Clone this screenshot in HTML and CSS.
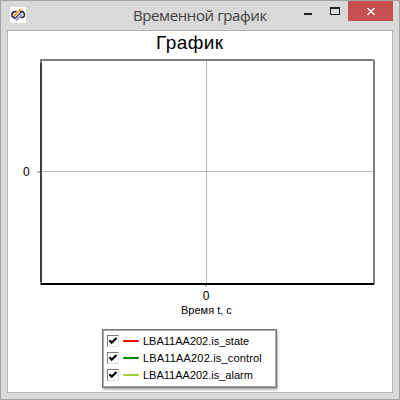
FILE: index.html
```
<!DOCTYPE html>
<html lang="ru">
<head>
<meta charset="utf-8">
<title>Временной график</title>
<link rel="stylesheet" href="styles.css">
</head>
<body>
<div class="window">
  <header class="titlebar">
    <svg class="app-icon" width="16" height="16" viewBox="0 0 16 16">
      <rect width="16" height="16" fill="#fff"/>
      <path d="M6.5 4.7H4L2 6.5V9L4 10.6H5M10 4.7H12.5L14.3 6.5V9L12.5 10.5H10.5" fill="none" stroke="#2d2550" stroke-width="1.7"/>
      <path d="M4.5 11.8L11.5 4.8" stroke="#2d2550" stroke-width="1.2"/>
      <path d="M6 13.4L12 7.4" stroke="#9693bd" stroke-width="2"/>
      <path d="M4 9L10.8 2.2" stroke="#f29a20" stroke-width="1.8"/>
    </svg>
    <h1 class="caption">Временной график</h1>
    <div class="controls">
      <svg class="control" width="27" height="20" viewBox="0 0 27 20" shape-rendering="crispEdges"><rect x="7" y="12" width="8" height="2" fill="#222"/></svg>
      <svg class="control" width="24" height="20" viewBox="0 0 24 20" shape-rendering="crispEdges"><path d="M6 6H16V14H6ZM7 8V13H15V8Z" fill="#222" fill-rule="evenodd"/></svg>
      <svg class="control close" width="45" height="20" viewBox="0 0 45 20" shape-rendering="crispEdges"><path d="M19 7h2v1h1v1h2v-1h1v-1h2v1h-1v1h-1v1h-1v1h1v1h1v1h1v1h-2v-1h-1v-1h-2v1h-1v1h-2v-1h1v-1h1v-1h1v-1h-1v-1h-1v-1h-1z" fill="#fff"/></svg>
    </div>
  </header>
  <main class="client">
    <h2 class="chart-title">График</h2>
    <div class="plot-row">
      <span class="y-tick">0</span>
      <svg class="plot" width="340" height="231" viewBox="0 0 340 231" shape-rendering="crispEdges">
        <path d="M4 113H336M170 2V225" stroke="#b8b8b8" transform="translate(.5 .5)"/>
        <rect x="1" y="113" width="3" height="2" fill="#b8b8b8"/>
        <rect x="169" y="226" width="2" height="3" fill="#b8b8b8"/>
        <rect x="4" y="1" width="334" height="2" fill="#808080"/>
        <rect x="337" y="2" width="2" height="224" fill="#808080"/>
        <rect x="4" y="2" width="2" height="3" fill="#808080"/>
        <rect x="4" y="5" width="2" height="219" fill="#404040"/>
        <rect x="4" y="224" width="2" height="3" fill="#808080"/>
        <rect x="5" y="225" width="333" height="2" fill="#000"/>
      </svg>
    </div>
    <div class="x-tick">0</div>
    <div class="x-title">Время t, с</div>
    <ul class="legend">
      <li class="entry"><svg class="check" width="12" height="12" viewBox="0 0 12 12"><path d="M2.5 5.2L4.7 7.7L9.5 3" fill="none" stroke="#000" stroke-width="2.2"/></svg><span class="swatch red"></span><span class="name">LBA11AA202.is_state</span></li>
      <li class="entry"><svg class="check" width="12" height="12" viewBox="0 0 12 12"><path d="M2.5 5.2L4.7 7.7L9.5 3" fill="none" stroke="#000" stroke-width="2.2"/></svg><span class="swatch green"></span><span class="name wide">LBA11AA202.is_control</span></li>
      <li class="entry"><svg class="check" width="12" height="12" viewBox="0 0 12 12"><path d="M2.5 5.2L4.7 7.7L9.5 3" fill="none" stroke="#000" stroke-width="2.2"/></svg><span class="swatch lime"></span><span class="name">LBA11AA202.is_alarm</span></li>
    </ul>
  </main>
</div>
</body>
</html>
```
FILE: styles.css
```
* { box-sizing: border-box; }
body { margin: 0; font-family: "Liberation Sans", Arial, sans-serif; color: #000; }
h1, h2, ul { margin: 0; padding: 0; font-weight: 400; }
svg { display: block; flex: none; }
.window {
  width: 400px;
  height: 400px;
  border: 1px solid #a2a2a2;
  background: #d9d9d9;
  padding: 0 6px 6px;
}
.titlebar {
  height: 29px;
  display: grid;
  grid-template-columns: 119px 1fr 96px;
  align-items: start;
}
.app-icon { margin: 6px 0 0 3px; }
.caption {
  font: 15px/29px "Open Sans", sans-serif;
  letter-spacing: -0.4px;
  color: #404040;
  white-space: nowrap;
  padding-left: 7px;
}
.controls { display: flex; justify-content: flex-end; }
.close { background: #c75050; }
.client {
  height: 363px;
  background: #fff;
  border: 1px solid #b2b2b2;
}
.chart-title { font-size: 19px; line-height: 23px; height: 27px; padding-left: 148px; letter-spacing: 0.45px; }
.plot-row { display: flex; height: 231px; }
.y-tick { width: 28px; padding: 107px 0 0 15px; font-size: 12px; line-height: 14px; }
.x-tick { font-size: 12px; line-height: 14px; height: 14px; width: 396px; text-align: center; }
.x-title { font-size: 11px; line-height: 14px; height: 26px; padding-left: 173px; }
.legend {
  list-style: none;
  width: 175px;
  height: 59px;
  margin-left: 94px;
  border: 1px solid #777;
  box-shadow: inset 0 0 0 1px #aaa, 1px 2px 2px rgba(0,0,0,.28);
  padding: 2px 0 0 4px;
}
.entry { display: flex; align-items: center; height: 17px; font-size: 11px; white-space: nowrap; }
.check { background: #fff; border: 1px solid #ddd; border-top-color: #777; border-left-color: #777; overflow: visible; }
.check path { transform: scale(1.2); transform-origin: 6px 6px; }
.swatch { width: 16px; height: 2px; margin: 1px 4px 0; border-radius: 1px; }
.red { background: #f00; }
.green { background: #008000; }
.lime { background: #a4cc38; }
.wide { letter-spacing: 0.17px; }
```
